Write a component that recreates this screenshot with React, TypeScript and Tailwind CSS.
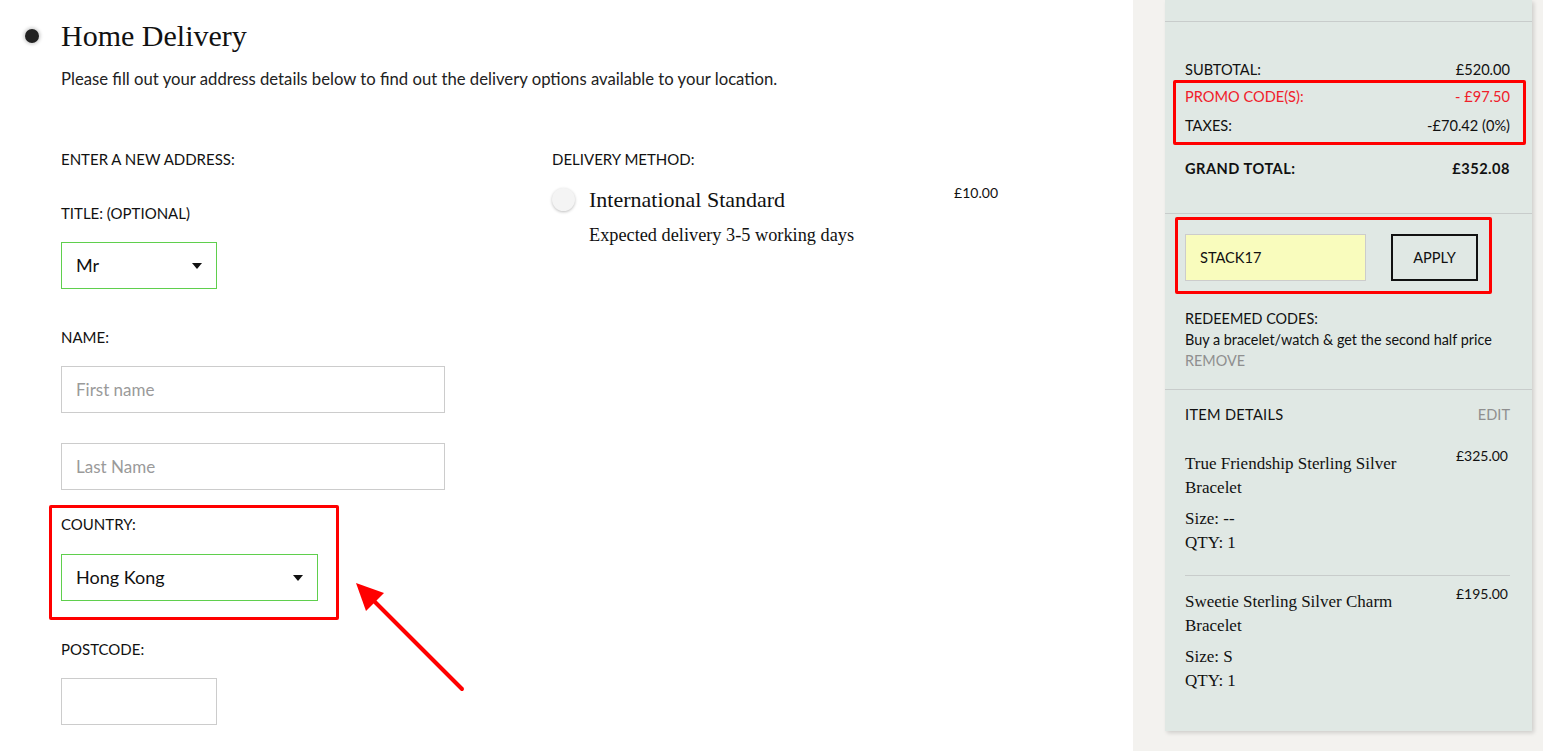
import React from 'react';

const sans = { fontFamily: 'Lato, "Open Sans", sans-serif' };
const serif = { fontFamily: '"Liberation Serif", "DejaVu Serif", serif' };

const Caret = () => (
  <svg width="10" height="6" viewBox="0 0 10 6" className="shrink-0">
    <path d="M0 0h10L5 6z" fill="#111" />
  </svg>
);

const Label = ({ children }: { children: React.ReactNode }) => (
  <div className="text-[15px] leading-[20px] text-[#111] uppercase">{children}</div>
);

const Row = ({ label, value, className = '' }: { label: string; value: string; className?: string }) => (
  <div className={`flex justify-between text-[14.6px] leading-[20px] ${className}`}>
    <span>{label}</span>
    <span>{value}</span>
  </div>
);

const items = [
  { name: 'True Friendship Sterling Silver Bracelet', price: '£325.00', size: '--' },
  { name: 'Sweetie Sterling Silver Charm Bracelet', price: '£195.00', size: 'S' },
];

export default function App() {
  return (
    <div className="flex w-[1543px] h-[751px] overflow-hidden bg-white text-[#111]" style={sans}>
      {/* main column */}
      <main className="relative w-[1133px] shrink-0 pl-[25px] pt-[18px]">
        <div className="flex items-center gap-[22px]">
          <span className="w-[14px] h-[14px] rounded-full bg-[#222] shadow-[0_0_3px_2px_rgba(0,0,0,0.15)]" />
          <h1 className="text-[30px] leading-[36px] text-[#111]" style={serif}>Home Delivery</h1>
        </div>
        <p className="pl-[36px] mt-[13px] text-[16.7px] leading-[24px] text-[#222]">
          Please fill out your address details below to find out the delivery options available to your location.
        </p>

        <div className="flex pl-[36px] mt-[58px]">
          <div className="w-[491px] shrink-0">
            <Label>Enter a new address:</Label>
            <div className="mt-[34px]"><Label>Title: (optional)</Label></div>
            <div className="mt-[19px] w-[156px] h-[47px] border border-[#5fcf4d] flex items-center justify-between pl-[14px] pr-[14px]">
              <span className="text-[18px]">Mr</span>
              <Caret />
            </div>
            <div className="mt-[38px]"><Label>Name:</Label></div>
            <div className="mt-[19px] w-[384px] h-[47px] border border-[#ccc] flex items-center pl-[14px] text-[17px] text-[#9a9a9a]">
              First name
            </div>
            <div className="mt-[30px] w-[384px] h-[47px] border border-[#ccc] flex items-center pl-[14px] text-[17px] text-[#9a9a9a]">
              Last Name
            </div>
            <div className="mt-[24px]"><Label>Country:</Label></div>
            <div className="mt-[20px] w-[257px] h-[47px] border border-[#5fcf4d] flex items-center justify-between pl-[14px] pr-[14px]">
              <span className="text-[18px]">Hong Kong</span>
              <Caret />
            </div>
            <div className="mt-[38px]"><Label>Postcode:</Label></div>
            <div className="mt-[19px] w-[156px] h-[47px] border border-[#ccc]" />
          </div>

          <div className="w-[446px]">
            <Label>Delivery method:</Label>
            <div className="flex mt-[18px]">
              <span className="w-[23px] h-[23px] mt-[1px] rounded-full bg-[#f4f4f4] shadow-[0_1px_3px_rgba(0,0,0,0.25)] shrink-0" />
              <div className="ml-[14px] flex-1">
                <div className="flex justify-between">
                  <span className="text-[22px] leading-[26px]" style={serif}>International Standard</span>
                  <span className="text-[14px] leading-[20px] -mt-[4px]">£10.00</span>
                </div>
                <div className="mt-[11px] text-[18.3px] leading-[22px]" style={serif}>Expected delivery 3-5 working days</div>
              </div>
            </div>
          </div>
        </div>

        {/* annotations */}
        <div className="absolute left-[49px] top-[505px] w-[290px] h-[115px] border-[3px] border-[#ff0000] rounded-[2px]" />
        <svg className="absolute left-[350px] top-[578px]" width="120" height="120" viewBox="0 0 120 120">
          <line x1="112" y1="111" x2="16" y2="15" stroke="#ff0000" strokeWidth="4" strokeLinecap="round" />
          <path d="M6 5 L34 15 L16 33 Z" fill="#ff0000" />
        </svg>
      </main>

      {/* order summary */}
      <aside className="flex-1 bg-[#f3f2ef] pl-[32px] pr-[11px]">
        <div className="relative h-[731px] bg-[#e0e8e4] shadow-[2px_2px_4px_rgba(0,0,0,0.15)]">
          <div className="h-[22px] border-b border-[#c8cccb]" />
          <div className="pl-[20px] pr-[22px] pt-[38px]">
            <Row label="SUBTOTAL:" value="£520.00" />
            <Row label="PROMO CODE(S):" value="- £97.50" className="mt-[7px] text-[#f0202a]" />
            <Row label="TAXES:" value="-£70.42 (0%)" className="mt-[9px]" />
            <div className="flex justify-between text-[14.6px] leading-[20px] font-bold tracking-[0.5px] mt-[23px]">
              <span>GRAND TOTAL:</span>
              <span>£352.08</span>
            </div>
          </div>
          <div className="mt-[34px] border-t border-[#c8cccb]" />
          <div className="px-[20px] pt-[20px] flex items-center gap-[25px]">
            <div className="w-[181px] h-[47px] bg-[#f9fcbd] border border-[#ccc] flex items-center pl-[14px] text-[14.6px]">
              STACK17
            </div>
            <div className="w-[87px] h-[47px] border-2 border-[#111] flex items-center justify-center text-[14.6px]">
              APPLY
            </div>
          </div>
          <div className="px-[20px] mt-[27px] text-[14.4px] leading-[21px]">
            <div>REDEEMED CODES:</div>
            <div>Buy a bracelet/watch &amp; get the second half price</div>
            <div className="text-[#8f8f8f]">REMOVE</div>
          </div>
          <div className="mt-[18px] border-t border-[#c8cccb]" />
          <div className="pl-[20px] pr-[22px] pt-[15px]">
            <div className="flex justify-between text-[14.6px] leading-[20px]">
              <span className="tracking-[0.3px]">ITEM DETAILS</span>
              <span className="text-[#8f8f8f]">EDIT</span>
            </div>
            {items.map((item, i) => (
              <div key={item.name} className={i === 0 ? 'pt-[27px] pb-[20px] border-b border-[#c8cccb]' : 'pt-[14px]'}>
                <div className="flex justify-between">
                  <span className="w-[240px] text-[17px] leading-[24px]" style={serif}>{item.name}</span>
                  <span className="text-[14px] leading-[20px] -mt-[6px] pr-[2px]">{item.price}</span>
                </div>
                <div className="mt-[7px] text-[17px] leading-[24px]" style={serif}>
                  <div>Size: {item.size}</div>
                  <div>QTY: 1</div>
                </div>
              </div>
            ))}
          </div>

          {/* annotations */}
          <div className="absolute left-[8px] top-[80px] w-[353px] h-[65px] border-[3px] border-[#ff0000] rounded-[2px]" />
          <div className="absolute left-[10px] top-[217px] w-[317px] h-[77px] border-[3px] border-[#ff0000] rounded-[2px]" />
        </div>
      </aside>
    </div>
  );
}
